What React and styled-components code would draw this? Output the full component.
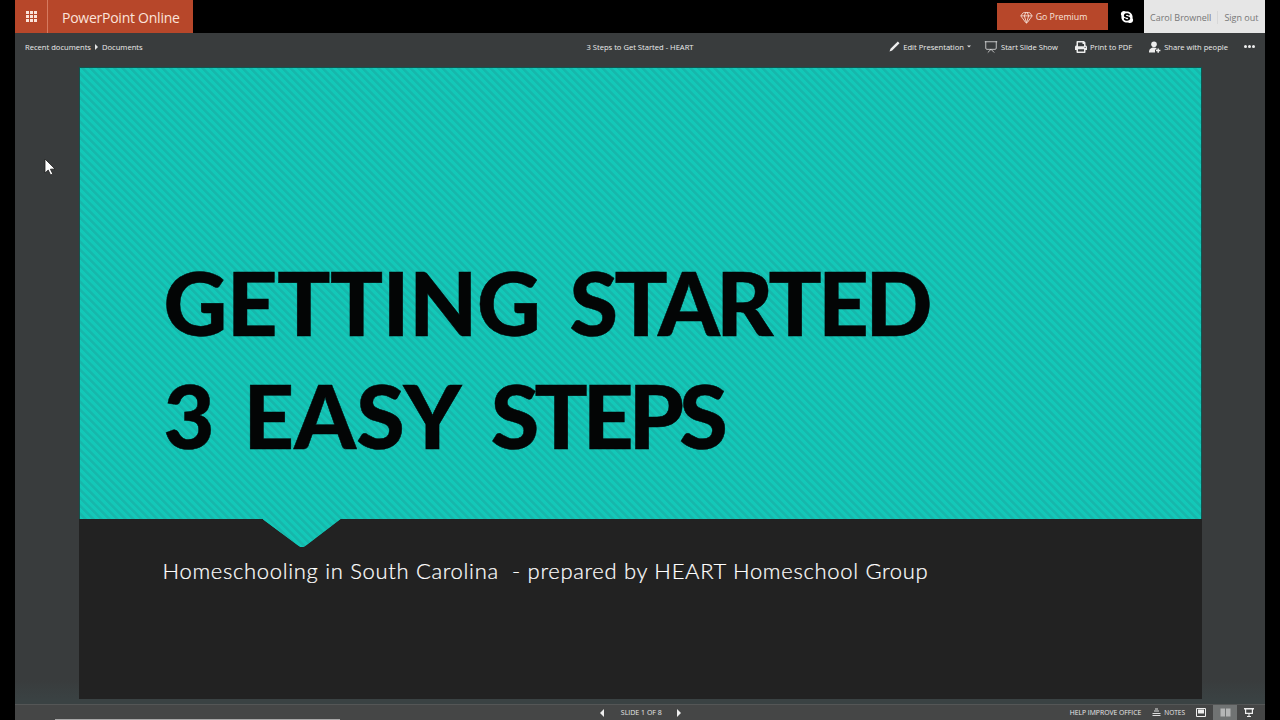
import styled, { createGlobalStyle } from "styled-components";
import { FaSkype, FaPrint } from "react-icons/fa";
import { Gem, Presentation } from "lucide-react";

const Global = createGlobalStyle`
	html, body {
		margin: 0;
		padding: 0;
		background: #000;
	}
	* {
		box-sizing: border-box;
	}
`;

const Page = styled.div`
	position: relative;
	display: flex;
	flex-direction: column;
	width: 1280px;
	height: 720px;
	padding: 0 15px;
	overflow: hidden;
	background: #000;
	font-family: "Open Sans", "Noto Sans", sans-serif;
`;

const TopBar = styled.header`
	display: flex;
	align-items: stretch;
	justify-content: space-between;
	height: 33px;
	flex: none;
`;

const Brand = styled.div`
	display: flex;
	align-items: stretch;
	width: 178px;
	background: #b7472a;
	color: #fbe3da;
`;

const Waffle = styled.div`
	display: grid;
	grid-template-columns: repeat(3, 3px);
	grid-auto-rows: 3px;
	gap: 1px;
	align-content: center;
	justify-content: center;
	width: 33px;
	border-right: 1px solid #d67a60;

	i {
		background: #fbe3da;
	}
`;

const BrandName = styled.span`
	display: flex;
	align-items: center;
	padding: 2px 0 0 14px;
	font-size: 14px;
	letter-spacing: -0.25px;
	line-height: 1;
`;

const TopRight = styled.div`
	display: flex;
	align-items: stretch;
`;

const Premium = styled.button`
	display: flex;
	align-items: center;
	justify-content: center;
	gap: 3px;
	width: 111px;
	height: 27px;
	margin-top: 3px;
	padding: 1px 0 0 2px;
	border: 0;
	background: #b7472a;
	color: #f8e4dc;
	font: 8.8px "Open Sans", sans-serif;
`;

const Skype = styled.div`
	display: flex;
	align-items: center;
	justify-content: center;
	width: 36px;
	padding: 1px 0 0 1px;
	color: #fff;
	font-size: 14px;
`;

const Account = styled.div`
	display: flex;
	align-items: center;
	width: 121px;
	padding: 1px 0 0 6px;
	background: #e6e6e6;
	color: #777;
	font-size: 9px;

	span:first-child {
		padding-right: 6px;
		border-right: 1px solid #d8d8d8;
		margin-right: 6px;
	}
`;

const ToolBar = styled.nav`
	position: relative;
	display: flex;
	align-items: center;
	justify-content: space-between;
	height: 27px;
	flex: none;
	padding: 0 10px;
	background: #393c3d;
	color: #ececec;
	font-size: 7.6px;
`;

const Crumbs = styled.div`
	display: flex;
	align-items: center;
	gap: 4px;
`;

const Caret = styled.span`
	width: 0;
	height: 0;
	border-left: 3px solid #e4e4e4;
	border-top: 3px solid transparent;
	border-bottom: 3px solid transparent;
`;

const DocTitle = styled.div`
	position: absolute;
	left: 0;
	right: 0;
	text-align: center;
`;

const Actions = styled.div`
	display: flex;
	align-items: center;
	gap: 17px;
	position: relative;
`;

const Action = styled.span`
	display: flex;
	align-items: center;
	gap: 3px;

	svg {
		flex: none;
	}
`;

const EditAction = styled(Action)`
	margin-right: -4px;
`;

const ShareAction = styled(Action)`
	margin-right: -1px;
`;

const More = styled.span`
	display: flex;
	gap: 1px;

	i {
		width: 3px;
		height: 3px;
		border-radius: 50%;
		background: #eee;
	}
`;

const Stage = styled.main`
	flex: 1;
	display: flex;
	justify-content: center;
	padding: 7px 0 5px;
	background: linear-gradient(#393c3d 0, #393c3d 620px, #3a4243 640px);
`;

const Slide = styled.section`
	display: flex;
	flex-direction: column;
	width: 1123px;
	height: 632px;
	background: #222222;
`;

const stripes = `
	background-color: #12c0b1;
	background-image: repeating-linear-gradient(
		45deg,
		#13c8b8 0,
		#13c8b8 2.6px,
		#17b7ab 3.2px,
		#17b7ab 5.1px,
		#13c8b8 5.657px
	);
	background-attachment: fixed;
`;

const Banner = styled.div`
	position: relative;
	display: flex;
	flex-direction: column;
	justify-content: flex-end;
	height: 452px;
	padding: 0 0 47px 84px;
	border: 1px solid #0f5650;
	border-bottom: 0;
	${stripes}

	&::after {
		content: "";
		position: absolute;
		left: 183px;
		top: 100%;
		width: 78px;
		height: 28px;
		clip-path: polygon(0 0, 100% 0, 44px 26px, 41px 28px, 38px 28px, 35px 26px);
		${stripes}
	}
`;

const Heading = styled.h1`
	margin: 0;
	color: #030505;
	font-family: Lato, sans-serif;
	font-size: 88px;
	font-weight: 900;
	line-height: 113px;
	word-spacing: 8px;
	white-space: nowrap;
	-webkit-text-stroke: 0.5px #030505;
`;

const Word = styled.span`
	letter-spacing: ${({ $tracking }) => $tracking}px;
`;

const Subtitle = styled.p`
	margin: 38px 0 0 84px;
	color: #ffffff;
	font-family: Lato, sans-serif;
	font-size: 22px;
	font-weight: 300;
	line-height: 28px;
	letter-spacing: 0.68px;
	white-space: pre;
	-webkit-text-stroke: 0.2px #ffffff;
`;

const StatusBar = styled.footer`
	position: relative;
	display: flex;
	align-items: center;
	height: 16px;
	flex: none;
	padding-right: 4px;
	background: #454646;
	border-top: 1px solid #545656;
	color: #e8e8e8;
	font-size: 7px;

	&::after {
		content: "";
		position: absolute;
		left: 40px;
		bottom: 0;
		width: 285px;
		height: 1px;
		background: #a8a8a8;
	}
`;

const Pager = styled.div`
	display: flex;
	align-items: center;
	justify-content: center;
	gap: 15px;
	flex: 1;
	padding-left: 196px;
`;

const Arrow = styled.span`
	width: 0;
	height: 0;
	border-top: 4px solid transparent;
	border-bottom: 4px solid transparent;
	${({ $left }) =>
		$left
			? "border-right: 4px solid #eee; margin-right: 2px;"
			: "border-left: 4px solid #eee;"}
`;

const StatusRight = styled.div`
	display: flex;
	align-items: center;
	height: 100%;
`;

const HelpLink = styled.span`
	margin-right: 11px;
	font-size: 6.8px;
`;

const Notes = styled.span`
	display: flex;
	align-items: center;
	gap: 3px;
	margin-right: 4px;
	font-size: 6.5px;
`;

const ViewButton = styled.span`
	display: flex;
	align-items: center;
	justify-content: center;
	width: 24px;
	height: 100%;
	background: ${({ $active }) => ($active ? "#707373" : "transparent")};
`;

const Pointer = styled.svg`
	position: absolute;
	left: 44px;
	top: 158px;
`;

export default function App() {
	return (
		<Page>
			<Global />
			<TopBar>
				<Brand>
					<Waffle>
						{Array.from({ length: 9 }, (_, i) => (
							<i key={i} />
						))}
					</Waffle>
					<BrandName>PowerPoint Online</BrandName>
				</Brand>
				<TopRight>
					<Premium>
						<Gem size={13} strokeWidth={1.6} />
						Go Premium
					</Premium>
					<Skype>
						<FaSkype />
					</Skype>
					<Account>
						<span>Carol Brownell</span>
						<span>Sign out</span>
					</Account>
				</TopRight>
			</TopBar>
			<ToolBar>
				<Crumbs>
					<span>Recent documents</span>
					<Caret />
					<span>Documents</span>
				</Crumbs>
				<DocTitle>3 Steps to Get Started - HEART</DocTitle>
				<Actions>
					<EditAction>
						<svg width="11" height="11" viewBox="0 0 11 11">
							<path d="M0.5 10.5 L1.5 7.8 L8.8 0.5 L10.5 2.2 L3.2 9.5 Z" fill="#eee" />
						</svg>
						Edit Presentation
						<svg width="4" height="3" viewBox="0 0 4 3">
							<path d="M0 0.5 H4 L2 2.5 Z" fill="#ddd" />
						</svg>
					</EditAction>
					<Action>
						<Presentation size={14} strokeWidth={1.3} />
						Start Slide Show
					</Action>
					<Action>
						<FaPrint size={12} />
						Print to PDF
					</Action>
					<ShareAction>
						<svg width="12" height="12" viewBox="0 0 12 12">
							<circle cx="5" cy="3.2" r="2.8" fill="#eee" />
							<path d="M0 11.5 C0 8 2 6.6 5 6.6 C6 6.6 6.8 6.8 7.4 7.1 L7.4 8.4 L6 8.4 L6 11.5 Z" fill="#eee" />
							<path d="M9.2 7.4 V11.8 M7 9.6 H11.4" stroke="#eee" strokeWidth="1.5" />
						</svg>
						Share with people
					</ShareAction>
					<More>
						<i />
						<i />
						<i />
					</More>
				</Actions>
			</ToolBar>
			<Stage>
				<Slide>
					<Banner>
						<Heading>
							<Word $tracking={-0.3}>GETTING</Word> <Word $tracking={-3.4}>STARTED</Word>
							<br />
							<Word $tracking={0}>3</Word> <Word $tracking={0.3}>EASY</Word> <Word $tracking={-4.7}>STEPS</Word>
						</Heading>
					</Banner>
					<Subtitle>Homeschooling in South Carolina  - prepared by HEART Homeschool Group</Subtitle>
				</Slide>
			</Stage>
			<StatusBar>
				<Pager>
					<Arrow $left />
					<span>SLIDE 1 OF 8</span>
					<Arrow />
				</Pager>
				<StatusRight>
					<HelpLink>HELP IMPROVE OFFICE</HelpLink>
					<Notes>
						<svg width="9" height="9" viewBox="0 0 9 9">
							<path d="M3 1 H6 M2 3 H7 M0.5 5.5 H8.5 M0.5 7.5 H8.5" stroke="#ddd" strokeWidth="1" />
						</svg>
						NOTES
					</Notes>
					<ViewButton>
						<svg width="10" height="9" viewBox="0 0 10 9">
							<path d="M0.5 0.5 H9.5 V8.5 H0.5 Z" fill="none" stroke="#eee" />
							<path d="M2 1.5 H8 V5.5 H2 Z" fill="#eee" />
						</svg>
					</ViewButton>
					<ViewButton $active>
						<svg width="11" height="9" viewBox="0 0 11 9">
							<path d="M0.5 0.5 H5 V8.5 H0.5 Z M6 0.5 H10.5 V8.5 H6 Z" fill="#b4b6b6" />
						</svg>
					</ViewButton>
					<ViewButton>
						<svg width="10" height="9" viewBox="0 0 10 9">
							<path d="M0 0 H10 V1.5 H9 V6 H1 V1.5 H0 Z M2.2 1.5 V4.8 H7.8 V1.5 Z" fill="#eee" />
							<path d="M5 6 V8 M3 8.5 H7" stroke="#eee" />
						</svg>
					</ViewButton>
				</StatusRight>
			</StatusBar>
			<Pointer width="12" height="18" viewBox="0 0 12 18">
				<path d="M1 1 L1 15 L4.2 12 L6.6 17 L8.8 16 L6.4 11.2 L11 11 Z" fill="#fff" stroke="#222" strokeWidth="0.8" />
			</Pointer>
		</Page>
	);
}
